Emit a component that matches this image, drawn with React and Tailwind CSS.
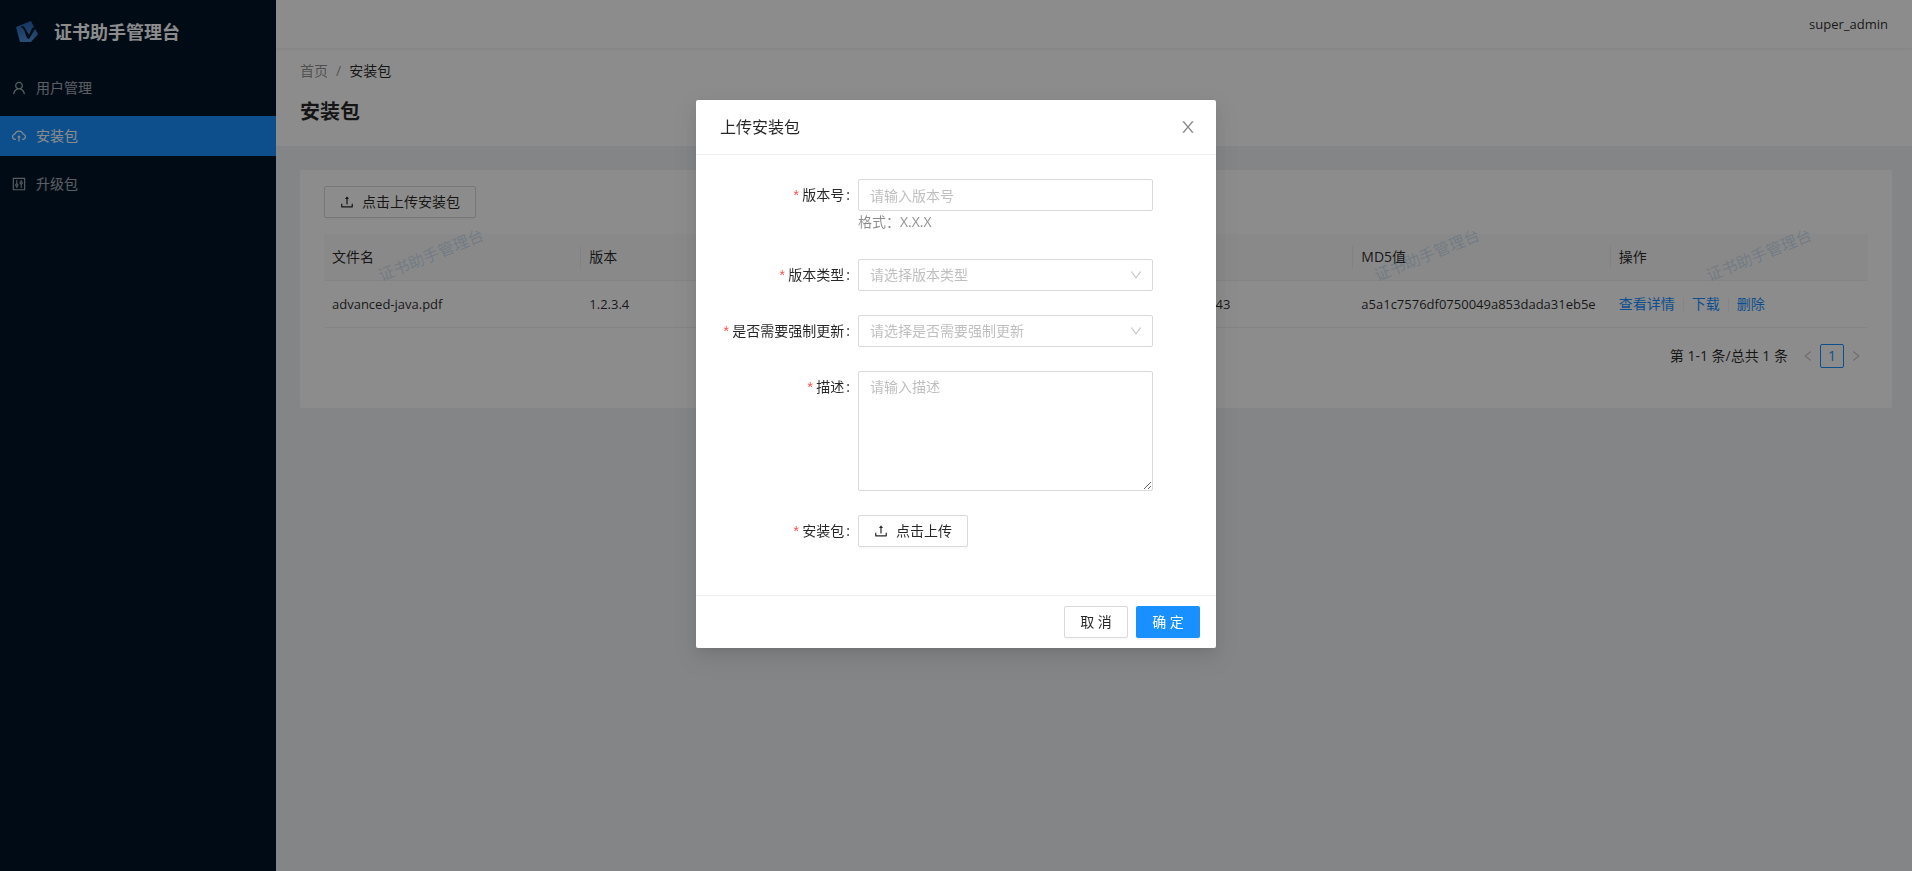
import React from "react";
import {
  AiOutlineCloudUpload,
  AiOutlineControl,
  AiOutlineDown,
  AiOutlineLeft,
  AiOutlineRight,
  AiOutlineUpload,
  AiOutlineUser,
} from "react-icons/ai";

// Crops the empty border that the icon set leaves around each glyph
const TIGHT = "64 64 896 896";

const menuItems = [
  { label: "用户管理", icon: AiOutlineUser },
  { label: "安装包", icon: AiOutlineCloudUpload, active: true },
  { label: "升级包", icon: AiOutlineControl },
];

const columns = ["文件名", "版本", "版本类型", "上传时间", "MD5值", "操作"];

const packages = [
  {
    name: "advanced-java.pdf",
    version: "1.2.3.4",
    type: "正式版",
    time: "2021-11-16T10:22:43",
    md5: "a5a1c7576df0750049a853dada31eb5e",
  },
];

const watermarks = [75, 1071, 1403];

const Logo = () => (
  <svg viewBox="0 0 22 22" className="h-[22px] w-[22px]" aria-hidden="true">
    <defs>
      <linearGradient id="logo-fill" x1="0" y1="0" x2="0" y2="1">
        <stop offset="0" stopColor="#2563b0" />
        <stop offset="1" stopColor="#4c8ed6" />
      </linearGradient>
    </defs>
    <path d="M0 6 L15 0 L18 6 L22 13 L15 21 L4 21 Z" fill="url(#logo-fill)" />
    <path d="M4 6 C6 5 8 5 9 7 L13 14 L16 7 L19 6 L19 8 L13 18 L11 17 L8 9 C7 7 6 6 4 6 Z" fill="#001529" />
  </svg>
);

const CloseIcon = () => (
  <svg viewBox={TIGHT} className="h-4 w-4" fill="currentColor" aria-hidden="true">
    <path d="M563.8 512l262.5-312.9c4.4-5.2.7-13.1-6.1-13.1h-79.8c-4.7 0-9.2 2.1-12.3 5.7L511.6 449.8 295.1 191.7c-3-3.6-7.5-5.7-12.3-5.7H203c-6.8 0-10.5 7.9-6.1 13.1L459.4 512 196.9 824.9A7.95 7.95 0 0 0 203 838h79.8c4.7 0 9.2-2.1 12.3-5.7l216.5-258.1 216.5 258.1c3 3.6 7.5 5.7 12.3 5.7h79.8c6.8 0 10.5-7.9 6.1-13.1L563.8 512z" />
  </svg>
);

const Sidebar = () => (
  <aside className="w-[276px] shrink-0 bg-[#001529]">
    <div className="flex h-16 items-center gap-4 px-4">
      <Logo />
      <h1 className="text-lg font-bold text-white">证书助手管理台</h1>
    </div>
    <nav className="mt-1 flex flex-col gap-2">
      {menuItems.map(({ label, icon: Icon, active }) => (
        <a
          key={label}
          href="#"
          className={
            active
              ? "flex h-10 items-center gap-[10px] bg-[#1890ff] px-3 text-white"
              : "flex h-10 items-center gap-[10px] px-3 text-white/65"
          }
        >
          <Icon size={14} viewBox={TIGHT} />
          <span>{label}</span>
        </a>
      ))}
    </nav>
  </aside>
);

const Watermark = () => (
  <div className="pointer-events-none absolute inset-0 overflow-hidden">
    {watermarks.map((left) => (
      <span
        key={left}
        className="absolute top-[73px] -rotate-[22deg] text-base whitespace-nowrap text-[#1677d2]/20"
        style={{ left }}
      >
        证书助手管理台
      </span>
    ))}
  </div>
);

const PackageTable = () => (
  <table className="mt-4 w-full table-fixed text-left">
    <thead>
      <tr className="border-b border-[#f0f0f0] bg-[#fafafa]">
        {columns.map((col, i) => (
          <th key={col} className="py-3 font-normal">
            <div className="relative px-2">
              {col}
              {i < columns.length - 1 && <span className="absolute right-0 top-0 h-[22px] w-px bg-black/6" />}
            </div>
          </th>
        ))}
      </tr>
    </thead>
    <tbody>
      {packages.map((row) => (
        <tr key={row.md5} className="border-b border-[#f0f0f0]">
          <td className="px-2 py-3 text-[13px]">{row.name}</td>
          <td className="px-2 py-3 text-[13px]">{row.version}</td>
          <td className="px-2 py-3">{row.type}</td>
          <td className="px-2 py-3 text-[13px]">{row.time}</td>
          <td className="px-2 py-3 text-[13px]">{row.md5}</td>
          <td className="px-2 py-3">
            <div className="flex items-center gap-2 text-[#1890ff]">
              <a href="#">查看详情</a>
              <span className="h-[13px] w-px bg-black/6" />
              <a href="#">下载</a>
              <span className="h-[13px] w-px bg-black/6" />
              <a href="#">删除</a>
            </div>
          </td>
        </tr>
      ))}
    </tbody>
  </table>
);

const Pagination = () => (
  <div className="mt-4 flex h-6 items-center justify-end">
    <span className="mr-2">第 1-1 条/总共 1 条</span>
    <button type="button" aria-label="上一页" disabled className="flex h-6 w-6 items-center justify-center text-black/25">
      <AiOutlineLeft size={12} viewBox={TIGHT} />
    </button>
    <button type="button" className="h-6 w-6 rounded-xs border border-[#1890ff] leading-[22px] text-[#1890ff]">
      1
    </button>
    <button type="button" aria-label="下一页" disabled className="flex h-6 w-6 items-center justify-center text-black/25">
      <AiOutlineRight size={12} viewBox={TIGHT} />
    </button>
  </div>
);

const UploadButton = ({ id, children }) => (
  <button
    id={id}
    type="button"
    className="flex h-8 items-center gap-2 rounded-xs border border-[#d9d9d9] bg-white px-[15px] shadow-[0_2px_0_rgba(0,0,0,0.016)]"
  >
    <AiOutlineUpload size={14} viewBox={TIGHT} />
    <span>{children}</span>
  </button>
);

const FormItem = ({ id, label, extra, children }) => (
  <div className="mb-6 flex items-start">
    <label htmlFor={id} className="flex h-8 w-[138px] shrink-0 items-center justify-end whitespace-nowrap">
      <span className="mr-[2px] pt-1 font-['Liberation_Mono',monospace] text-[#ff4d4f]">*</span>
      {label}
      <span className="ml-[2px] mr-2">:</span>
    </label>
    <div className="w-[295px]">
      {children}
      {extra && <div className="min-h-6 text-black/45">{extra}</div>}
    </div>
  </div>
);

const SelectBox = ({ id, placeholder, options }) => (
  <div className="relative">
    <select
      id={id}
      defaultValue=""
      className="h-8 w-full appearance-none rounded-xs border border-[#d9d9d9] bg-white px-[11px] text-[#bfbfbf] outline-none"
    >
      <option value="">{placeholder}</option>
      {options.map((opt) => (
        <option key={opt}>{opt}</option>
      ))}
    </select>
    <AiOutlineDown
      size={12}
      viewBox={TIGHT}
      className="pointer-events-none absolute right-[11px] top-[10px] text-black/25"
    />
  </div>
);

const UploadModal = () => (
  <div className="fixed inset-0 flex items-start justify-center bg-black/45 pt-[100px]">
    <div
      role="dialog"
      aria-labelledby="modal-title"
      className="w-[520px] rounded-xs bg-white shadow-[0_3px_6px_-4px_rgba(0,0,0,0.12),0_6px_16px_0_rgba(0,0,0,0.08),0_9px_28px_8px_rgba(0,0,0,0.05)]"
    >
      <div className="flex items-center justify-between border-b border-[#f0f0f0] px-6 py-4">
        <h2 id="modal-title" className="text-base leading-[22px] font-normal">
          上传安装包
        </h2>
        <button type="button" aria-label="关闭" className="-mr-1 text-black/45">
          <CloseIcon />
        </button>
      </div>

      <form className="px-6 pt-6 pb-6">
        <FormItem id="version" label="版本号" extra="格式：X.X.X">
          <input
            id="version"
            type="text"
            placeholder="请输入版本号"
            className="block h-8 w-full rounded-xs border border-[#d9d9d9] px-[11px] outline-none placeholder:text-[#bfbfbf]"
          />
        </FormItem>
        <FormItem id="type" label="版本类型">
          <SelectBox id="type" placeholder="请选择版本类型" options={["正式版", "测试版"]} />
        </FormItem>
        <FormItem id="force" label="是否需要强制更新">
          <SelectBox id="force" placeholder="请选择是否需要强制更新" options={["是", "否"]} />
        </FormItem>
        <FormItem id="desc" label="描述">
          <textarea
            id="desc"
            placeholder="请输入描述"
            className="block h-[120px] w-full resize rounded-xs border border-[#d9d9d9] px-[11px] py-1 outline-none placeholder:text-[#bfbfbf]"
          />
        </FormItem>
        <FormItem id="file" label="安装包">
          <UploadButton id="file">点击上传</UploadButton>
        </FormItem>
      </form>

      <div className="flex justify-end gap-2 border-t border-[#f0f0f0] px-4 py-[10px]">
        <button
          type="button"
          className="h-8 w-16 rounded-xs border border-[#d9d9d9] bg-white shadow-[0_2px_0_rgba(0,0,0,0.016)]"
        >
          取 消
        </button>
        <button type="submit" className="h-8 w-16 rounded-xs bg-[#1890ff] text-white shadow-[0_2px_0_rgba(0,0,0,0.045)]">
          确 定
        </button>
      </div>
    </div>
  </div>
);

const App = () => {
  return (
    <div className="flex min-h-screen bg-[#f0f2f5] font-['Open_Sans','Noto_Sans_CJK_SC',sans-serif] text-sm leading-[22px] text-black/85">
      <Sidebar />
      <div className="min-w-0 flex-1">
        <header className="relative flex h-12 items-center justify-end bg-white px-6 text-[13px] shadow-[0_1px_4px_rgba(0,21,41,0.08)]">
          super_admin
        </header>

        {/* Page header */}
        <div className="bg-white px-6 pt-3 pb-[18px]">
          <nav className="flex gap-2">
            <a href="#" className="text-black/45">首页</a>
            <span className="text-black/45">/</span>
            <span>安装包</span>
          </nav>
          <h2 className="mt-[14px] text-xl leading-8 font-bold">安装包</h2>
        </div>

        <main className="py-6 pr-5 pl-6">
          <section className="relative rounded-xs bg-white px-6 pt-4 pb-10">
            <UploadButton>点击上传安装包</UploadButton>
            <PackageTable />
            <Pagination />
            <Watermark />
          </section>
        </main>
      </div>
      <UploadModal />
    </div>
  );
};

export default App;
